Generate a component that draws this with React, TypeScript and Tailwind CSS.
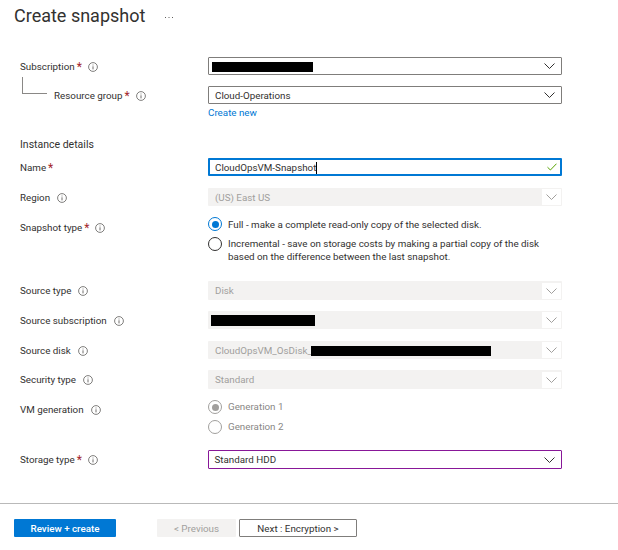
import React from 'react';

const font = { fontFamily: 'Roboto, sans-serif' };

function Info() {
  return (
    <svg width="10" height="10" viewBox="0 0 10 10" className="shrink-0" fill="none">
      <circle cx="5" cy="5" r="4.4" stroke="#605e5c" strokeWidth="0.8" />
      <path d="M5 4.3V7.4" stroke="#605e5c" strokeWidth="0.9" />
      <path d="M5 2.6V3.4" stroke="#605e5c" strokeWidth="0.9" />
    </svg>
  );
}

function Chevron({ color = '#323130' }: { color?: string }) {
  return (
    <svg width="11" height="6" viewBox="0 0 11 6" fill="none">
      <path d="M0.5 0.5L5.5 5.5L10.5 0.5" stroke={color} strokeWidth="1" />
    </svg>
  );
}

function Star() {
  return <span className="ml-[2px] text-[12px] leading-[18px] text-[#a4262c]">*</span>;
}

function Label({ text, required, indent }: { text: string; required?: boolean; indent?: boolean }) {
  return (
    <div className={`w-[188px] h-[18px] shrink-0 flex items-center text-[9.8px] leading-[18px] text-[#323130] pt-px ${indent ? 'pl-[34px]' : ''}`}>
      <span>{text}</span>
      {required && <Star />}
      <span className={required ? 'ml-[6px]' : 'ml-[7px]'}>
        <Info />
      </span>
    </div>
  );
}

function Select({ children }: { children: React.ReactNode }) {
  return (
    <div className="flex-1 h-[18px] flex items-center justify-between border border-[#7f7d7b] rounded-[1px] pl-[6px] pr-[6px] text-[9.8px] text-[#323130]">
      <div className="flex items-center pt-[2px]">{children}</div>
      <Chevron />
    </div>
  );
}

function Disabled({ children, h = 'h-[18px]' }: { children: React.ReactNode; h?: string }) {
  return (
    <div className={`flex-1 ${h} flex items-center justify-between bg-[#f3f2f1] rounded-[1px] pl-[7px] pr-px text-[9.8px] text-[#a19f9d]`}>
      <div className="flex items-center pt-[2px]">{children}</div>
      <div className="w-[19px] h-[16px] bg-white flex items-center justify-center">
        <Chevron color="#a19f9d" />
      </div>
    </div>
  );
}

function Radio({ checked, disabled }: { checked?: boolean; disabled?: boolean }) {
  const ring = disabled ? 'border-[#a19f9d]' : checked ? 'border-[#0078d4]' : 'border-[#323130]';
  const dot = disabled ? 'bg-[#a19f9d]' : 'bg-[#0078d4]';
  return (
    <div className={`w-[14px] h-[14px] rounded-full border ${ring} flex items-center justify-center shrink-0`}>
      {checked && <div className={`w-[7px] h-[7px] rounded-full ${dot}`} />}
    </div>
  );
}

export default function App() {
  return (
    <div className="w-[618px] h-[550px] bg-white overflow-hidden relative" style={font}>
      <div className="h-[57px] pl-[14px] flex items-start">
        <h1 className="text-[18px] leading-[32px] text-[#323130]">Create snapshot</h1>
        <svg width="8" height="1" viewBox="0 0 8 1" className="ml-[20px] mt-[17px]" fill="#605e5c">
          <rect x="0" width="1" height="1" />
          <rect x="3.5" width="1" height="1" />
          <rect x="7" width="1" height="1" />
        </svg>
      </div>

      <div className="pl-5 pr-14">
        <div className="absolute left-[22px] top-[77px] w-[25px] h-[17px] border-l border-b border-[#8a8886]" />

        <div className="flex">
          <Label text="Subscription" required />
          <Select>
            <div className="w-[101px] h-[10px] -ml-[3px] -mt-px bg-black" />
          </Select>
        </div>

        <div className="flex mt-[11px]">
          <Label text="Resource group" required indent />
          <Select>Cloud-Operations</Select>
        </div>

        <div className="flex h-[18px]">
          <div className="w-[188px]" />
          <a className="text-[9.8px] leading-[18px] text-[#0078d4]">Create new</a>
        </div>

        <div className="mt-[14px] h-[18px] text-[10.5px] leading-[18px] text-[#323130]">Instance details</div>

        <div className="flex mt-[4px]">
          <div className="w-[188px] h-[18px] shrink-0 flex items-center text-[9.8px] leading-[18px] text-[#323130] pt-px">
            <span>Name</span>
            <Star />
          </div>
          <div className="flex-1 h-[18px] flex items-center justify-between border-2 border-[#0078d4] rounded-[1px] pl-[5px] pr-[3px] text-[9.8px] text-[#323130]">
            <div className="flex items-center pt-[2px]">
              CloudOpsVM-Snapshot
              <div className="w-px h-[12px] -mt-px bg-black" />
            </div>
            <svg width="10" height="8" viewBox="0 0 10 8" fill="none">
              <path d="M0.5 4.2L3.4 7L9.5 0.7" stroke="#57a300" strokeWidth="1" />
            </svg>
          </div>
        </div>

        <div className="flex mt-3">
          <Label text="Region" />
          <Disabled>(US) East US</Disabled>
        </div>

        <div className="flex mt-2">
          <div className="pt-[4px]">
            <Label text="Snapshot type" required />
          </div>
          <div className="flex-1 text-[9.8px] leading-[13px] text-[#323130]">
            <div className="flex items-center h-5 gap-[6px]">
              <Radio checked />
              <span>Full - make a complete read-only copy of the selected disk.</span>
            </div>
            <div className="flex gap-[6px] mt-[3px]">
              <Radio />
              <span>
                Incremental - save on storage costs by making a partial copy of the disk
                <br />
                based on the difference between the last snapshot.
              </span>
            </div>
          </div>
        </div>

        <div className="flex mt-[18px]">
          <Label text="Source type" />
          <Disabled h="h-[19px]">Disk</Disabled>
        </div>

        <div className="flex mt-[11px]">
          <Label text="Source subscription" />
          <Disabled>
            <div className="w-[104px] h-[11px] -ml-[4px] -mt-[2px] bg-black" />
          </Disabled>
        </div>

        <div className="flex mt-3">
          <Label text="Source disk" />
          <Disabled>
            CloudOpsVM_OsDisk_
            <div className="w-[180px] h-[10px] -ml-px -mt-px bg-black" />
          </Disabled>
        </div>

        <div className="flex mt-[11px]">
          <Label text="Security type" />
          <Disabled h="h-[19px]">Standard</Disabled>
        </div>

        <div className="flex mt-[8px]">
          <div className="pt-[3px]">
            <Label text="VM generation" />
          </div>
          <div className="flex-1 text-[9.8px] leading-5 text-[#8a8886]">
            <div className="flex items-center h-5 gap-[6px]">
              <Radio checked disabled />
              <span>Generation 1</span>
            </div>
            <div className="flex items-center h-5 gap-[6px]">
              <Radio disabled />
              <span>Generation 2</span>
            </div>
          </div>
        </div>

        <div className="flex mt-[13px]">
          <Label text="Storage type" required />
          <div className="flex-1 h-[19px] flex items-center justify-between border-[1.5px] border-[#881798] rounded-[1px] pl-[5.5px] pr-[6px] text-[9.8px] text-[#323130]">
            <span className="pt-[2px]">Standard HDD</span>
            <Chevron />
          </div>
        </div>
      </div>

      <div className="mt-[34px] border-t border-[#b9b9b9] pt-[15px] pl-[14px] flex text-[9.8px]">
        <button className="w-[102px] h-[18px] pt-[2px] bg-[#0078d4] rounded-[1px] text-white font-medium flex items-center justify-center">
          Review + create
        </button>
        <button className="ml-[41px] w-[79px] h-[18px] pt-[2px] bg-[#f3f2f1] rounded-[1px] text-[#a19f9d] flex items-center justify-center">
          &lt; Previous
        </button>
        <button className="ml-[3px] w-[118px] h-[18px] pt-[2px] border border-[#7f7d7b] rounded-[1px] text-[#323130] flex items-center justify-center">
          Next : Encryption &gt;
        </button>
      </div>
    </div>
  );
}
